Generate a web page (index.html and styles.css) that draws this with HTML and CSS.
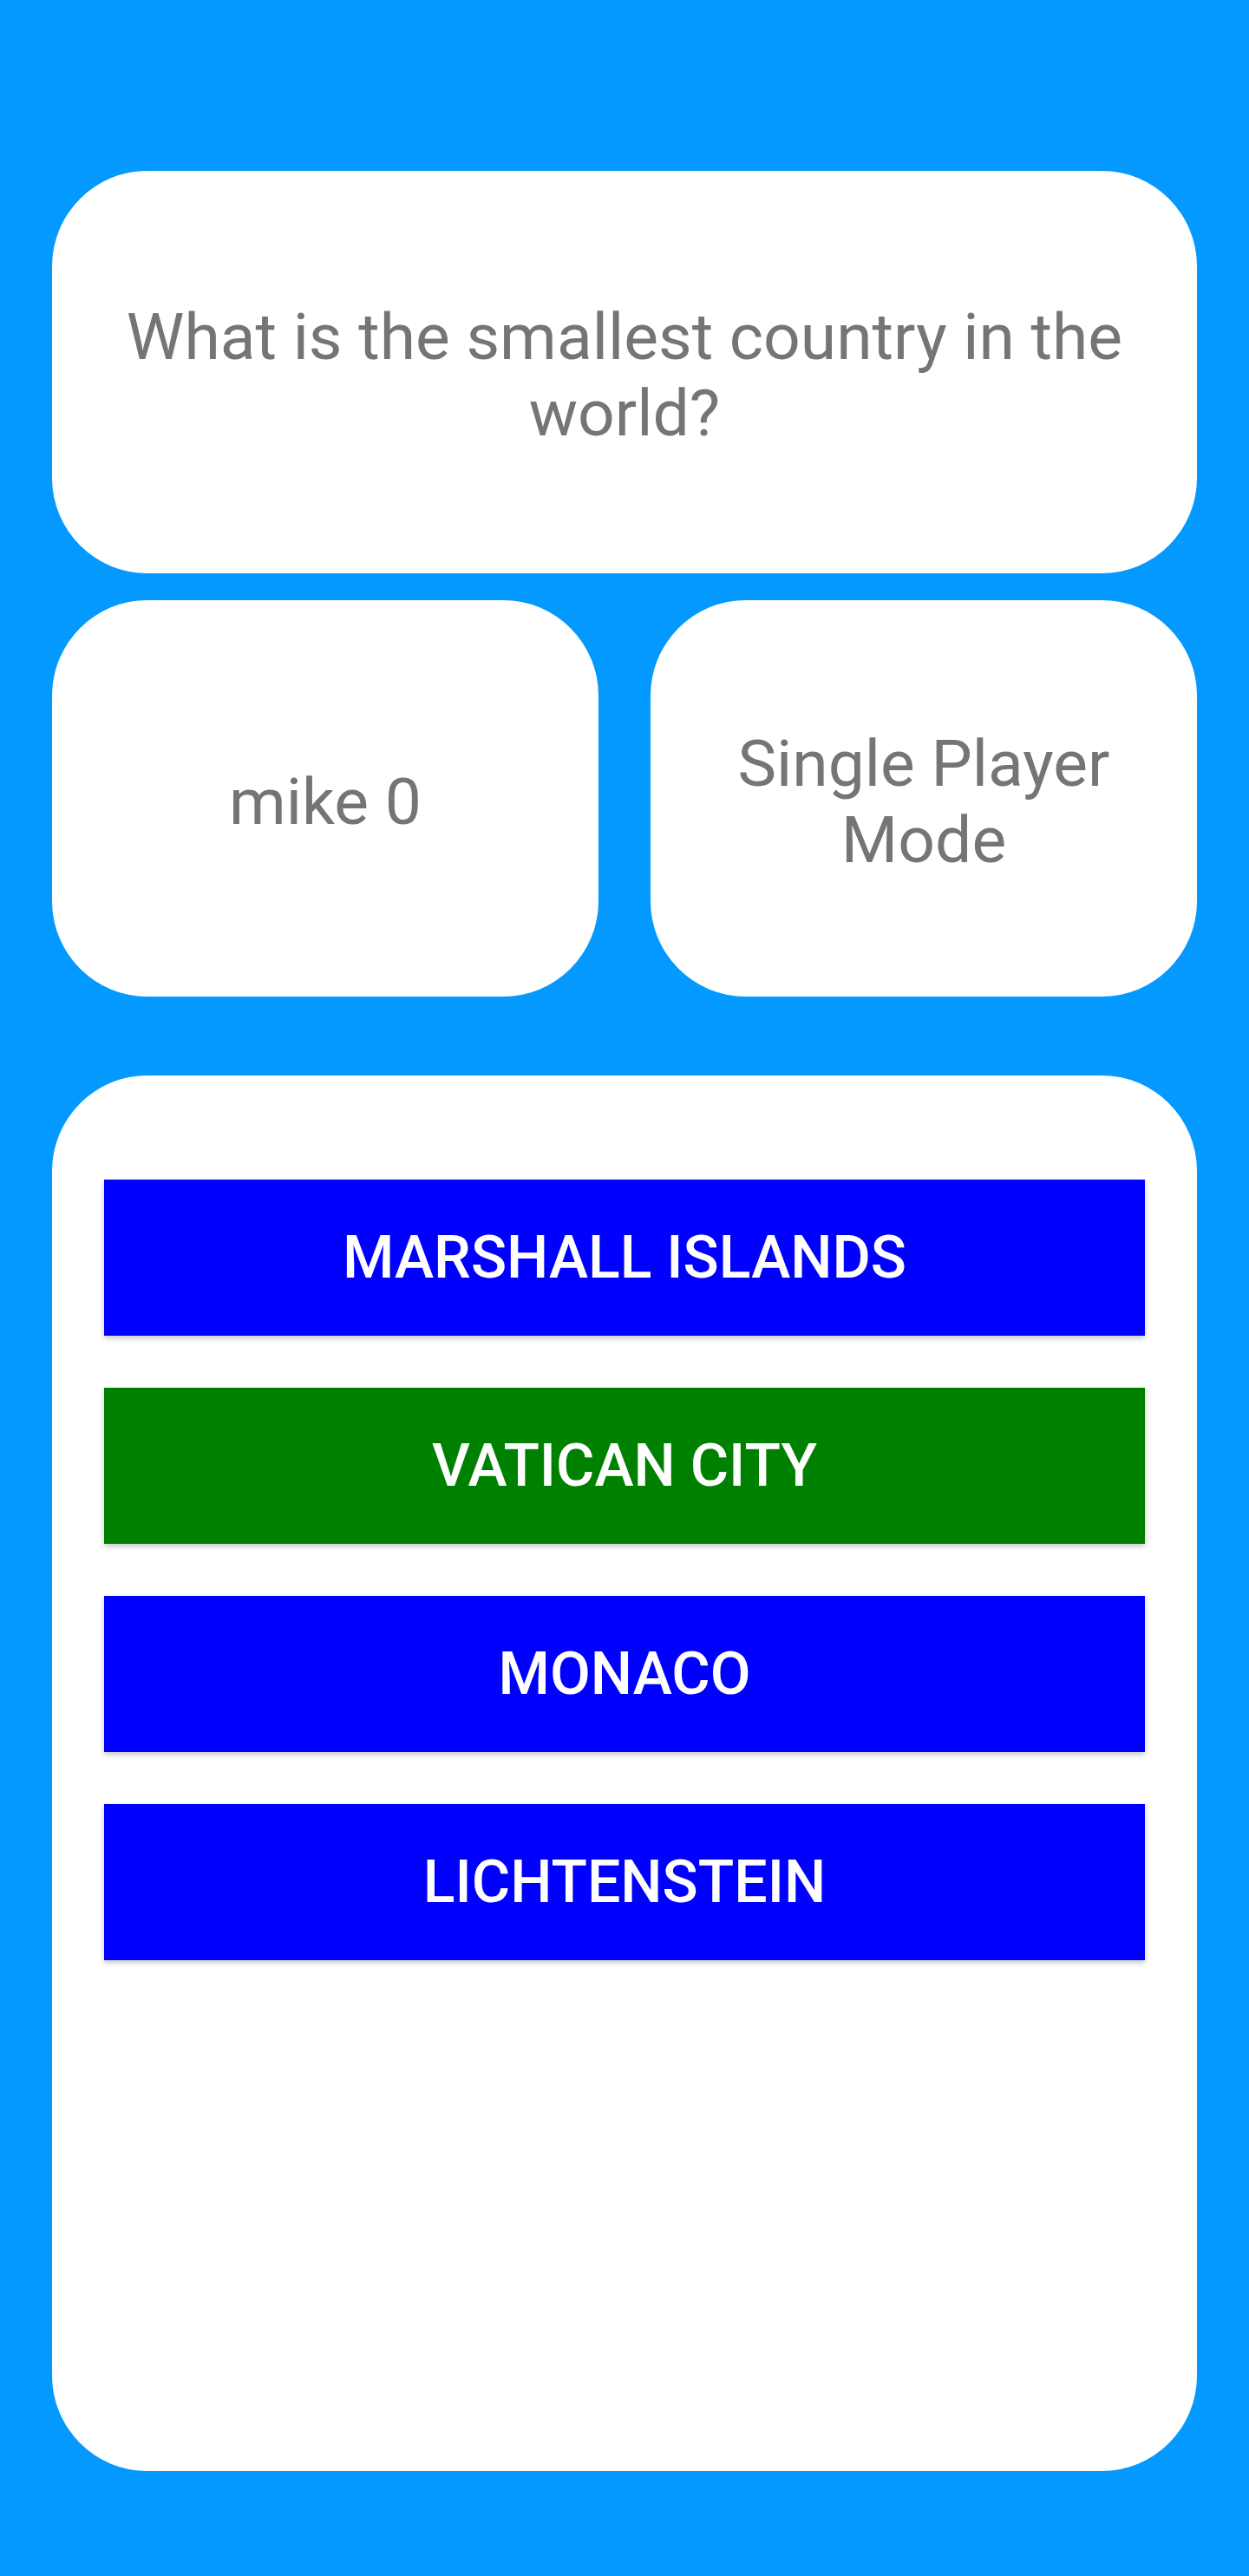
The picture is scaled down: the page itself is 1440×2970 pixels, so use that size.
FILE: index.html
```html
<!DOCTYPE html>
<html>
<head>
<meta charset="utf-8">
<link rel="stylesheet" href="styles.css">
</head>
<body>
<main class="screen">
  <section class="card question">
    <p class="label">What is the smallest country in the world?</p>
  </section>
  <div class="info-row">
    <section class="card info">
      <p class="label">mike 0</p>
    </section>
    <section class="card info">
      <p class="label">Single Player Mode</p>
    </section>
  </div>
  <section class="card answers">
    <button class="answer blue">Marshall Islands</button>
    <button class="answer green">Vatican City</button>
    <button class="answer blue">Monaco</button>
    <button class="answer blue">Lichtenstein</button>
  </section>
</main>
</body>
</html>
```

FILE: styles.css
```css
html, body {
  margin: 0;
  padding: 0;
}
body {
  background: #0399ff;
  font-family: Roboto, "Liberation Sans", sans-serif;
}
.screen {
  display: flex;
  flex-direction: column;
  padding: 197px 60px 0 60px;
  height: 2970px;
  box-sizing: border-box;
}
.card {
  background: #ffffff;
  border-radius: 110px;
  display: flex;
  align-items: center;
  justify-content: center;
  box-sizing: border-box;
}
.label {
  margin: 0;
  padding-top: 6px;
  color: #757575;
  font-size: 75px;
  line-height: 88px;
  text-align: center;
  font-weight: 400;
}
.question {
  height: 464px;
  padding: 0 60px;
}
.info-row {
  display: grid;
  grid-template-columns: 1fr 1fr;
  gap: 60px;
  margin-top: 31px;
}
.info {
  height: 457px;
  padding: 0 40px;
}
.answers {
  margin-top: 91px;
  height: 1609px;
  flex-direction: column;
  justify-content: flex-start;
  align-items: stretch;
  padding: 120px 60px 0 60px;
  gap: 60px;
}
.answer {
  height: 180px;
  border: none;
  border-radius: 0;
  color: #ffffff;
  font-family: Roboto, "Liberation Sans", sans-serif;
  font-weight: 500;
  font-size: 68px;
  letter-spacing: 0;
  text-transform: uppercase;
  box-shadow: 0 3px 6px rgba(0, 0, 0, 0.22);
  padding: 0;
}
.blue {
  background: #0000ff;
}
.green {
  background: #008000;
}
```
